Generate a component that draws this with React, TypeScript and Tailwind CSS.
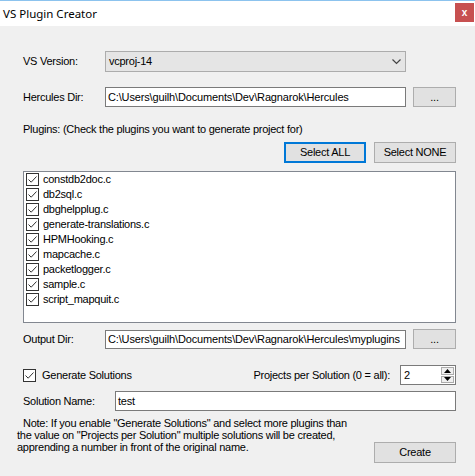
import React from "react";

const items = [
  "constdb2doc.c",
  "db2sql.c",
  "dbghelpplug.c",
  "generate-translations.c",
  "HPMHooking.c",
  "mapcache.c",
  "packetlogger.c",
  "sample.c",
  "script_mapquit.c",
];

function Check() {
  return (
    <span className="w-[13px] h-[13px] border border-[#333333] bg-white flex items-center justify-center shrink-0">
      <svg width="11" height="11" viewBox="0 0 11 11">
        <path d="M1.5 5.5 L4.2 8.2 L9.5 2.5" fill="none" stroke="#333333" strokeWidth="1" />
      </svg>
    </span>
  );
}

function Btn({ children, w, focus }: { children: React.ReactNode; w: string; focus?: boolean }) {
  return (
    <div
      className={
        (focus ? "border-2 border-[#0078d7] " : "border border-[#adadad] ") +
        "bg-[#e1e1e1] h-full flex items-center justify-center " +
        w
      }
    >
      {children}
    </div>
  );
}

export default function App() {
  return (
    <div
      className="w-[475px] h-[476px] bg-[#f0f0f0] border-t border-[#8cc3ee] flex flex-col text-[11px] leading-[13px] tracking-[-0.25px] text-black"
      style={{ fontFamily: '"Liberation Sans", Arial, sans-serif' }}
    >
      {/* title bar */}
      <div className="h-[25px] bg-white flex items-center justify-between">
        <span
          className="pl-[3px] text-[11.5px] tracking-normal text-black"
          style={{ fontFamily: '"Noto Sans", "Open Sans", sans-serif' }}
        >
          VS Plugin Creator
        </span>
        <div className="w-[19px] h-[19px] bg-[#c75050] flex items-center justify-center text-white text-[10px] font-bold mr-[1px] mb-[3px]">
          x
        </div>
      </div>

      <div className="flex flex-col pl-[23px] pr-[19px]">
        {/* VS version */}
        <div className="mt-[25px] h-[21px] flex items-center">
          <span className="w-[82px]">VS Version:</span>
          <div className="w-[301px] h-full bg-[#e5e5e5] border border-[#acacac] flex items-center justify-between pl-[3px] pr-[4px]">
            <span>vcproj-14</span>
            <svg width="9" height="6" viewBox="0 0 9 6">
              <path d="M0.5 0.5 L4.5 4.5 L8.5 0.5" fill="none" stroke="#444" strokeWidth="1.2" />
            </svg>
          </div>
        </div>

        {/* Hercules dir */}
        <div className="mt-[15px] h-[20px] flex items-center">
          <span className="w-[82px]">Hercules Dir:</span>
          <div className="w-[301px] h-full bg-white border border-[#7a7a7a] flex items-center pl-[2px] overflow-hidden whitespace-nowrap tracking-[-0.15px]">
            C:\Users\guilh\Documents\Dev\Ragnarok\Hercules
          </div>
          <div className="ml-[7px] h-full">
            <Btn w="w-[43px]">...</Btn>
          </div>
        </div>

        {/* plugins label */}
        <div className="mt-[16px] h-[13px]">
          Plugins: (Check the plugins you want to generate project for)
        </div>

        {/* select buttons */}
        <div className="mt-[6px] h-[21px] flex justify-end gap-[8px]">
          <Btn w="w-[82px]" focus>
            Select ALL
          </Btn>
          <Btn w="w-[82px]">Select NONE</Btn>
        </div>

        {/* listbox */}
        <div className="mt-[8px] h-[152px] bg-white border border-[#828790] flex flex-col">
          {items.map((it) => (
            <div key={it} className="h-[15px] flex items-center pl-[2px]">
              <Check />
              <span className="ml-[4px]">{it}</span>
            </div>
          ))}
        </div>

        {/* output dir */}
        <div className="mt-[6px] h-[20px] flex items-center">
          <span className="w-[82px]">Output Dir:</span>
          <div className="w-[301px] h-[19px] bg-white border border-[#7a7a7a] flex items-center pl-[2px] overflow-hidden whitespace-nowrap tracking-[-0.15px]">
            C:\Users\guilh\Documents\Dev\Ragnarok\Hercules\myplugins
          </div>
          <div className="ml-[7px] h-full">
            <Btn w="w-[43px]">...</Btn>
          </div>
        </div>

        {/* generate solutions */}
        <div className="mt-[16px] h-[20px] flex items-center">
          <Check />
          <span className="ml-[6px]">Generate Solutions</span>
          <span className="ml-auto">Projects per Solution (0 = all):</span>
          <div className="ml-[10px] w-[56px] h-[20px] bg-white border border-[#7a7a7a] flex items-center">
            <span className="pl-[3px] flex-1">2</span>
            <div className="w-[15px] h-full flex flex-col gap-[1px] p-[1px] pr-[1px]">
              <div className="flex-1 bg-[#f0f0f0] border border-[#acacac] flex items-center justify-center">
                <svg width="7" height="4" viewBox="0 0 7 4">
                  <path d="M0 4 L3.5 0 L7 4 Z" fill="#000" />
                </svg>
              </div>
              <div className="flex-1 bg-[#f0f0f0] border border-[#acacac] flex items-center justify-center">
                <svg width="7" height="4" viewBox="0 0 7 4">
                  <path d="M0 0 L3.5 4 L7 0 Z" fill="#000" />
                </svg>
              </div>
            </div>
          </div>
        </div>

        {/* solution name */}
        <div className="mt-[6px] h-[20px] flex items-center">
          <span className="w-[92px]">Solution Name:</span>
          <div className="flex-1 h-full bg-white border border-[#7a7a7a] flex items-center pl-[2px]">
            test
          </div>
        </div>

        {/* note + create */}
        <div className="mt-[6px] flex">
          <div className="ml-[-6px] flex flex-col leading-[12px] whitespace-nowrap">
            <span className="pl-[6px]">
              Note: If you enable "Generate Solutions" and select more plugins than
            </span>
            <span>the value on "Projects per Solution" multiple solutions will be created,</span>
            <span>apprending a number in front of the original name.</span>
          </div>
          <div className="ml-auto mt-[25px] h-[21px]">
            <Btn w="w-[82px]">Create</Btn>
          </div>
        </div>
      </div>
    </div>
  );
}
